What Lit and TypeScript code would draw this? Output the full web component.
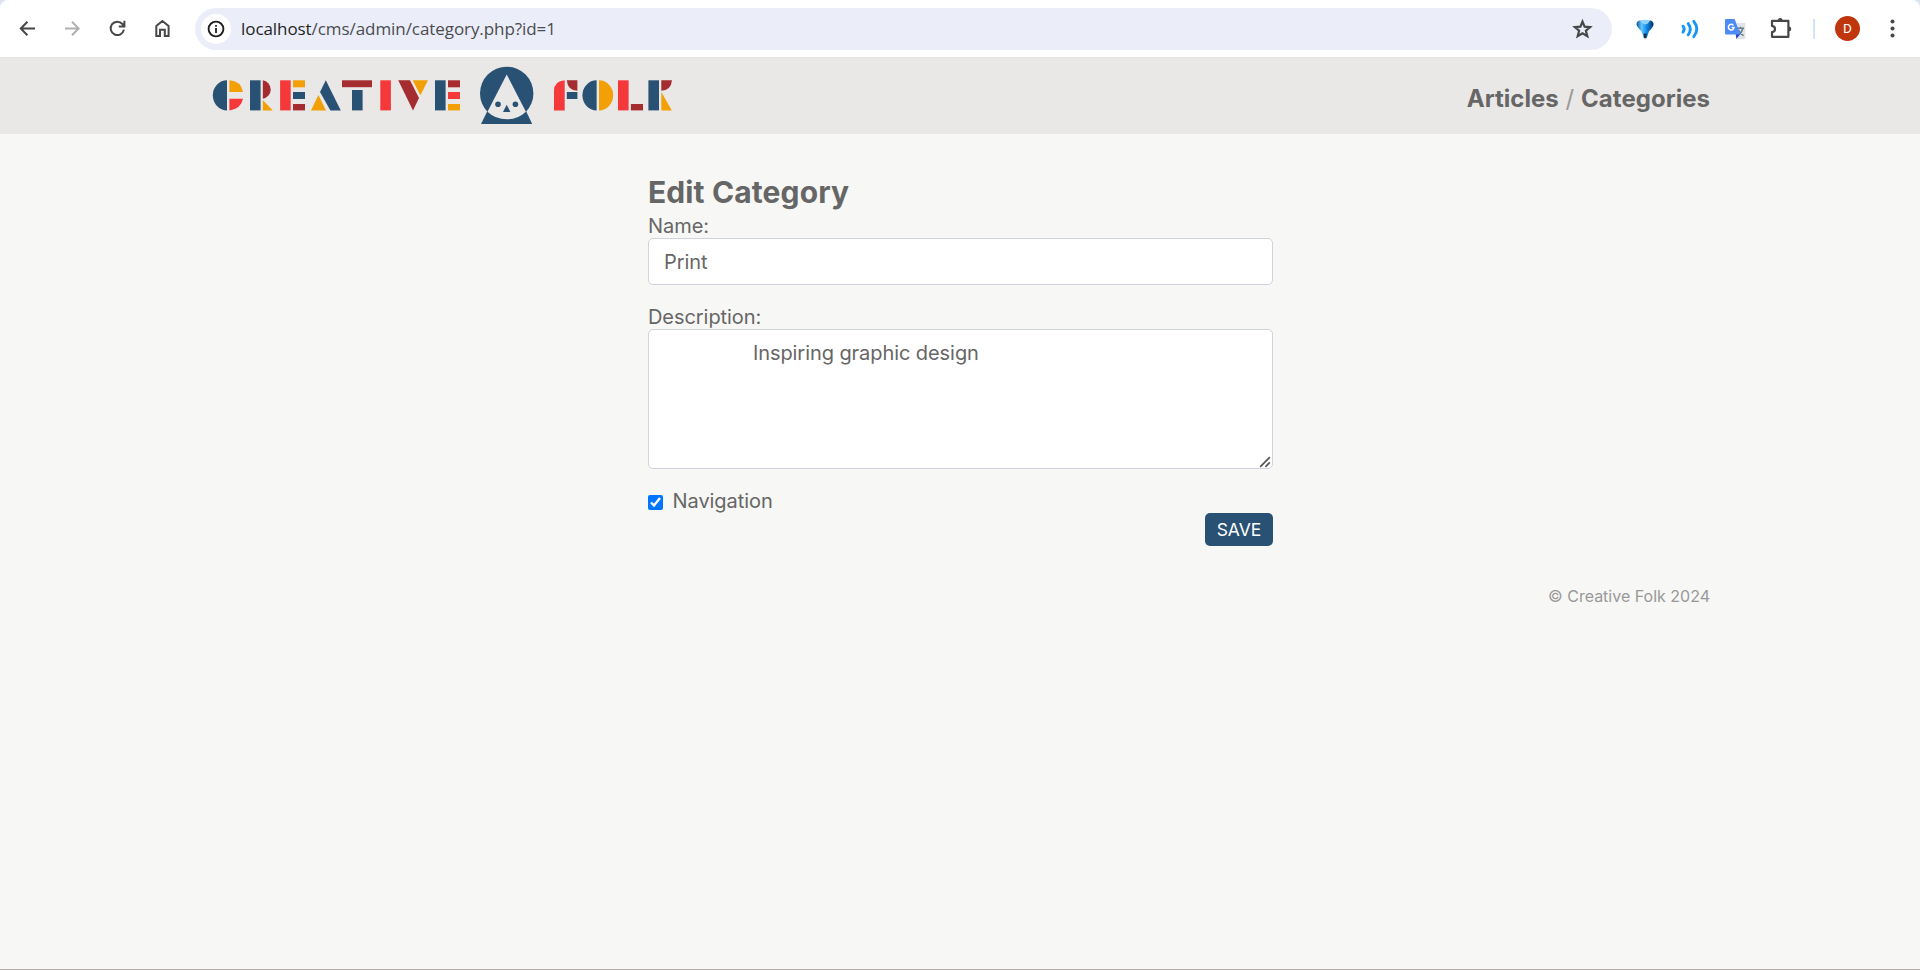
import { LitElement, html, css, svg } from "lit";
import { customElement, property } from "lit/decorators.js";

const BLUE = "#285173";
const RED = "#f5393b";
const DARK = "#a52c2f";
const GOLD = "#f3a006";

@customElement("browser-bar")
class BrowserBar extends LitElement {
  static styles = css`
    :host { display: flex; box-sizing: border-box; height: 58px; padding: 0 16px 0 15px; align-items: center; background: #fff; border-bottom: 1px solid #e2e3e2; border-radius: 8px 8px 0 0; flex: none; }
    svg { display: block; flex: none; }
    .nav { display: flex; gap: 21px; margin-right: 21px; }
    .pill { flex: 1; height: 42px; border-radius: 21px; background: #ebeef8; display: flex; align-items: center; padding: 0 17px 0 6px; box-sizing: border-box; }
    .info { width: 30px; height: 30px; border-radius: 50%; background: #fff; display: flex; align-items: center; justify-content: center; margin-right: 10px; }
    .url { flex: 1; font: 17px/24px "Open Sans", "Noto Sans", sans-serif; letter-spacing: -0.07px; color: #4a4c50; white-space: nowrap; }
    .host { color: #1f1f1f; }
    .tools { display: flex; align-items: center; margin-left: 21px; }
    .g { margin-right: 21px; }
    .sep { width: 2px; height: 20px; background: #d3e3fd; margin: 0 20px 0 0; }
    .avatar { width: 25px; height: 25px; border-radius: 50%; background: #bf360c; color: #fff; font: 13.5px/25px Roboto, sans-serif; text-align: center; margin-right: 20px; }
  `;
  render() {
    return html`
      <div class="nav">
        <svg width="24" height="24" viewBox="0 0 24 24" fill="none" stroke="#474747" stroke-width="2"><path d="M20 11.5H6M12.4 4.7L5.8 11.5L12.4 18.3"/></svg>
        <svg width="24" height="24" viewBox="0 0 24 24" fill="none" stroke="#b0b0b0" stroke-width="2"><path d="M5 11.5H18.4M12 4.7L18.6 11.5L12 18.3"/></svg>
        <svg width="24" height="24" viewBox="0 0 24 24" fill="none" stroke="#474747" stroke-width="2"><path d="M18.9 12.6A6.7 6.7 0 1 1 17.4 7L19.2 8.8M19.4 3.8V9.4H13.8"/></svg>
        <svg width="24" height="24" viewBox="0 0 24 24" fill="none" stroke="#474747" stroke-width="2"><path d="M6.3 19V9L12.4 4L18.6 9V19H14.8V12.8H10V19Z"/></svg>
      </div>
      <div class="pill">
        <span class="info"><svg width="20" height="20" viewBox="0 0 20 20"><circle cx="10" cy="10" r="7.4" fill="none" stroke="#1f1f1f" stroke-width="1.9"/><path d="M9.1 9H10.9V14H9.1zM9.1 6H10.9V7.8H9.1z" fill="#1f1f1f"/></svg></span>
        <span class="url"><span class="host">localhost</span>/cms/admin/category.php?id=1</span>
        <svg width="24" height="24" viewBox="0 0 24 24" fill="none" stroke="#474747" stroke-width="2.2"><path d="M11.5 4.6L13.6 9.7L19.1 10.1L14.9 13.7L16.3 19.1L11.5 16.2L6.7 19.1L8.1 13.7L3.9 10.1L9.4 9.7Z"/></svg>
      </div>
      <div class="tools">
        <svg class="g" width="24" height="24" viewBox="0 0 24 24"><defs><linearGradient id="b" x1="0" x2="1"><stop offset="0" stop-color="#0b4d9c"/><stop offset=".3" stop-color="#66c9ff"/><stop offset=".55" stop-color="#1593f0"/><stop offset="1" stop-color="#052f68"/></linearGradient></defs><path d="M3.5 7Q4 4 7 3.6Q12 5 17 3.6Q20 4 20.6 7Q20.8 9.5 16 14.2L13.9 20.6H10.6L8.4 14.2Q3.4 9.5 3.5 7Z" fill="url(#b)"/><path d="M7 3.6Q12 1.8 17 3.6Q14.8 7.6 12.4 7.6Q9 7.2 7 3.6Z" fill="#8fd2fb"/><path d="M10.6 16.6H13.8L13.4 21.3H11Z" fill="#19334d"/></svg>
        <svg class="g" width="24" height="24" viewBox="0 0 24 24" fill="none" stroke="#1697f6" stroke-width="2.9" stroke-linecap="round"><path d="M5 9.2Q7.4 12.2 5 15.2M10.2 6.6Q14.4 12.2 10.2 17.8M15.8 4.4Q21.8 12 15.8 19.6"/></svg>
        <svg class="g" width="24" height="24" viewBox="0 0 24 24"><path d="M11 6H22.4V22H14z" fill="#e1e3e6"/><path d="M14 11.2H21M17.5 9.8V11.4M19.8 11.4Q18.8 16 15 18.6M15.6 13Q17 16.8 20.6 18.6" fill="none" stroke="#607d8b" stroke-width="1.4"/><path d="M12.6 16.8H17.4L13.4 22Z" fill="#3342c5"/><path d="M3 2H11.6L17.4 17.6H3Q2 17.6 2 16.6V3Q2 2 3 2Z" fill="#4c8bf5"/><path d="M10.4 8.4A2.8 2.8 0 1 0 11 10.4H8.6" fill="none" stroke="#fff" stroke-width="1.5"/></svg>
        <svg class="g" width="24" height="24" viewBox="0 0 24 24"><path d="M4 3.9H20.4V19.8H4V15.2Q7 14.8 7 12Q7 9.3 4 8.9Z" fill="none" stroke="#474747" stroke-width="2.2" stroke-linejoin="round"/><path d="M9.8 3.3Q10 .9 12.2 .9T14.6 3.3ZM21 9.5Q23.3 9.7 23.3 12T21 14.4Z" fill="#474747"/></svg>
        <i class="sep"></i>
        <span class="avatar">D</span>
        <svg width="24" height="24" viewBox="0 0 24 24" fill="#474747"><circle cx="12.5" cy="4.5" r="2"/><circle cx="12.5" cy="11.5" r="2"/><circle cx="12.5" cy="18.5" r="2"/></svg>
      </div>`;
  }
}

@customElement("site-logo")
class SiteLogo extends LitElement {
  static styles = css`:host, svg { display: block; }`;
  private rect(x: number, y: number, r: number, b: number, fill: string) {
    return svg`<rect x=${x} y=${y} width=${r - x} height=${b - y} fill=${fill}/>`;
  }
  private arms(x: number, colors: string[]) {
    return [[80.3, 87.3], [92, 99], [104, 110.4]].map(([t, b], i) => this.rect(x, t, x + 12, b, colors[i]));
  }
  render() {
    const stem = (x: number, fill: string) => this.rect(x, 80.3, x + 10.6, 110.4, fill);
    return html`<svg width="461" height="60" viewBox="212 66 461 60" role="img" aria-label="Creative Folk">
      <path d="M227 80.3A14.2 15.05 0 0 0 227 110.4Z" fill=${BLUE}/>
      <path d="M229.4 80.3Q241 81 243 92H229.4Z" fill=${GOLD}/>
      <path d="M229.4 110.4Q241 109 243 98.8H229.4Z" fill=${RED}/>
      ${stem(250, BLUE)}
      <path d="M262.8 80.3A9.3 9.3 0 0 1 262.8 98.7Z" fill=${DARK}/>
      <path d="M262.8 100L272.8 110.4H262.8Z" fill=${GOLD}/>
      ${stem(280.1, RED)}${this.arms(293, [GOLD, BLUE, DARK])}
      <path d="M325.8 80.3L340.8 110.4H330.4L320 92Z" fill=${BLUE}/>
      <path d="M318.4 95L326 110.4H311Z" fill=${GOLD}/>
      ${this.rect(342, 80.3, 372, 87.2, DARK)}${this.rect(352, 90, 362.6, 110.4, BLUE)}
      ${stem(380.3, RED)}
      <path d="M398.2 80.3H410L419 98L413 110.4Z" fill=${DARK}/>
      <path d="M412.6 80.3H428L420.4 95.2Z" fill=${GOLD}/>
      ${stem(435, BLUE)}${this.arms(448, [DARK, RED, GOLD])}
      <circle cx="506.7" cy="93.4" r="26.7" fill=${BLUE}/>
      <path d="M487.4 111L481 124H532.2L526 111Z" fill=${BLUE}/>
      <path d="M506.7 74.4L525.9 111.7Q518 119.3 506.7 119.3T487.5 111.7Z" fill="#e9e8e6"/>
      <circle cx="498" cy="104.3" r="2.8" fill=${BLUE}/><circle cx="515.4" cy="104.3" r="2.8" fill=${BLUE}/>
      <path d="M506.7 104.8L510.4 112H503Z" fill=${BLUE}/>
      <path d="M564.7 80.3V110.4H554V91Q554 81 564.7 80.3Z" fill=${RED}/>
      <path d="M566.8 80.3H577.4V90.8Q567.6 90.5 566.8 80.3Z" fill=${DARK}/>
      ${this.rect(566.8, 92, 577.4, 99, BLUE)}
      <path d="M596.6 80.3A14.2 15.05 0 0 0 596.6 110.4Z" fill=${BLUE}/>
      <path d="M599 80.3A14.2 15.05 0 0 1 599 110.4Z" fill=${GOLD}/>
      ${stem(618, RED)}${this.rect(630.9, 104, 643, 110.4, DARK)}
      ${stem(648.4, BLUE)}
      <path d="M661.3 80.3H672Q671 90.5 661.3 90.8Z" fill=${DARK}/>
      <path d="M661.3 92L671.8 110.4H661.3Z" fill=${GOLD}/>
    </svg>`;
  }
}

@customElement("category-form")
class CategoryForm extends LitElement {
  @property() name = "Print";
  @property() description = " ".repeat(16) + "Inspiring graphic design";
  static styles = css`
    :host { display: flex; flex-direction: column; width: 625px; color: #666; font: 20px/24px Inter, sans-serif; letter-spacing: -0.06px; }
    h1 { margin: 0 0 3px; font-size: 30px; line-height: 38px; font-weight: 700; letter-spacing: 0.12px; }
    input, textarea { box-sizing: border-box; width: 100%; margin: 0; border: 1px solid #ced4da; border-radius: 5px; background: #fff; color: #666; font: 20px/24px Inter, sans-serif; letter-spacing: -0.07px; display: block; outline: none; }
    .text { height: 47px; padding: 0 15px; margin-bottom: 20px; }
    .field { position: relative; margin-bottom: 19px; }
    .area { height: 140px; padding: 11px 15px; resize: none; }
    .grip { position: absolute; right: 2px; bottom: 1px; }
    .check { display: flex; align-items: center; height: 25px; gap: 9.5px; }
    .box { width: 15px; height: 15px; margin: 4px 0 0; accent-color: #0075ff; flex: none; }
    button { align-self: flex-end; width: 68px; height: 33px; border: 0; border-radius: 5px; padding: 0; background: #285173; color: #fff; font: 17.5px/33px Inter, sans-serif; }
  `;
  render() {
    return html`<h1>Edit Category</h1>
      <label for="name">Name:</label>
      <input id="name" class="text" .value=${this.name} />
      <label for="description">Description:</label>
      <div class="field">
        <textarea id="description" class="area" spellcheck="false" .value=${this.description}></textarea>
        <svg class="grip" width="12" height="12" viewBox="0 0 12 12" stroke="#555" stroke-width="1.7"><path d="M1.2 10.8L10.8 1.2M6.4 10.8L10.8 6.4"/></svg>
      </div>
      <label class="check"><input class="box" type="checkbox" checked />Navigation</label>
      <button type="button">SAVE</button>`;
  }
}

@customElement("app-root")
class AppRoot extends LitElement {
  static styles = css`
    :host { display: flex; flex-direction: column; box-sizing: border-box; height: 970px; background: #f7f7f5; border-bottom: 1px solid #b5aeac; font-family: Inter, sans-serif; }
    .top { background: #dce3ee; }
    header { height: 76px; background: #e9e8e6; display: flex; justify-content: space-between; align-items: center; padding: 0 210px 0 212px; }
    nav { font-size: 24px; line-height: 30px; color: #999; padding-top: 6px; white-space: pre; letter-spacing: 0.03px; }
    nav a { font-weight: 700; color: #666; }
    main { display: flex; justify-content: center; padding: 39px 0 0 1px; }
    footer { padding: 40px 210px 0; text-align: right; font-size: 16px; line-height: 20px; color: #999; }
  `;
  render() {
    return html`<div class="top"><browser-bar></browser-bar></div>
      <header><site-logo></site-logo><nav><a>Articles</a> / <a>Categories</a></nav></header>
      <main><category-form></category-form></main>
      <footer>© Creative Folk 2024</footer>`;
  }
}
